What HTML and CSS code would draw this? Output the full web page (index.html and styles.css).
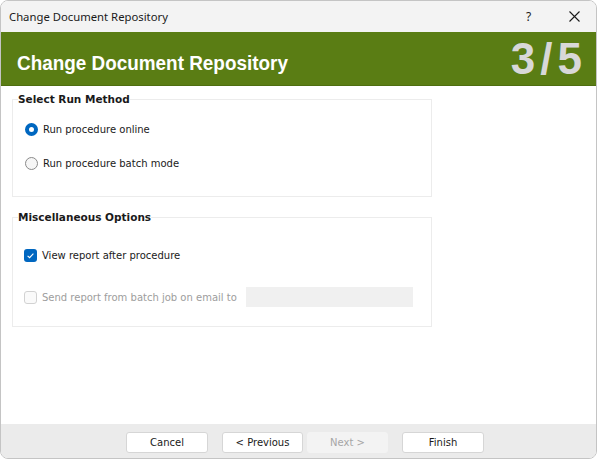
FILE: index.html
```html
<!DOCTYPE html>
<html>
<head>
<meta charset="utf-8">
<link rel="stylesheet" href="styles.css">
</head>
<body>
<div class="window">
  <div class="titlebar">
    <span class="title">Change Document Repository</span>
    <span class="tb-help">?</span>
    <span class="tb-close"><svg width="11" height="11" viewBox="0 0 11 11"><path d="M0.5 0.5L10.5 10.5M10.5 0.5L0.5 10.5" stroke="#1a1a1a" stroke-width="1.1" fill="none"/></svg></span>
  </div>
  <div class="banner">
    <span class="banner-title">Change Document Repository</span>
    <span class="banner-step">3/5</span>
  </div>
  <div class="content">
    <fieldset class="group group-run">
      <legend>Select Run Method</legend>
      <div class="row row-first"><span class="radio radio-on"></span><span class="label">Run procedure online</span></div>
      <div class="row"><span class="radio"></span><span class="label">Run procedure batch mode</span></div>
    </fieldset>
    <fieldset class="group group-misc">
      <legend>Miscellaneous Options</legend>
      <div class="row row-first"><span class="check check-on"><svg width="13" height="13" viewBox="0 0 13 13"><path d="M3.6 6.8L5.6 8.7L9.4 4.6" stroke="#fff" stroke-width="1.1" fill="none"/></svg></span><span class="label">View report after procedure</span></div>
      <div class="row row-email"><span class="check check-off"></span><span class="label label-off">Send report from batch job on email to</span><span class="email"></span></div>
    </fieldset>
  </div>
  <div class="footer">
    <button class="btn">Cancel</button>
    <button class="btn btn-prev">&lt; Previous</button>
    <button class="btn btn-next">Next &gt;</button>
    <button class="btn btn-finish">Finish</button>
  </div>
</div>
</body>
</html>
```
FILE: styles.css
```css
html, body { margin: 0; padding: 0; background: #ffffff; }
.window {
  width: 595px;
  height: 457px;
  margin-top: 0;
  border: 1px solid #c4c4c4;
  border-radius: 8px;
  overflow: hidden;
  display: flex;
  flex-direction: column;
  background: #ffffff;
}
.titlebar {
  height: 31px;
  flex: none;
  background: #f3f3f3;
  display: flex;
  align-items: center;
  font-family: "Noto Sans", "Open Sans", sans-serif;
  font-size: 11.3px;
  color: #1a1a1a;
}
.title { margin-left: 8px; flex: 1; }
.tb-help { width: 20px; margin-right: 23px; font-size: 12px; }
.tb-close { width: 11px; margin-right: 16px; display: flex; }
.banner {
  height: 53px;
  flex: none;
  background: #5a7d14;
  display: flex;
  align-items: center;
  justify-content: space-between;
  font-family: "Liberation Sans", Arial, sans-serif;
  font-weight: bold;
  border-bottom: 1px solid #4e6e10;
  overflow: hidden;
}
.banner-title {
  color: #ffffff;
  font-size: 21px;
  margin-left: 16px;
  margin-top: 9px;
  display: inline-block;
  transform: scaleX(0.9);
  transform-origin: left center;
  white-space: nowrap;
}
.banner-step {
  color: #d8d8d8;
  font-size: 44px;
  margin-right: 9px;
  letter-spacing: 5px;
  display: inline-block;
}
.content {
  flex: 1;
  padding: 6px 0 0 11px;
  font-family: "DejaVu Sans", Tahoma, sans-serif;
  font-size: 10px;
  color: #1a1a1a;
}
.group {
  width: 420px;
  margin: 0;
  padding: 0 0 0 11px;
  border: 1px solid #ececec;
  box-sizing: border-box;
}
.group legend {
  font-weight: bold;
  padding: 0;
  margin-left: -6px;
  font-family: "DejaVu Sans", Tahoma, sans-serif;
  font-size: 10.5px;
  line-height: 14px;
}
.group-run { height: 105px; }
.group-misc { height: 117px; margin-top: 13px; }
.row { display: flex; align-items: center; height: 20px; margin-top: 14px; }
.group-run .row-first { margin-top: 13px; }
.group-misc .row-first { margin-top: 21px; }
.group-misc .row-email { margin-top: 22px; }
.label { margin-left: 5px; }
.label-off { color: #9d9d9d; }
.radio {
  width: 13px; height: 13px; box-sizing: border-box;
  border-radius: 50%;
  border: 1px solid #8a8a8a;
  background: #f6f6f6;
  margin-left: 1px;
}
.radio-on {
  border: 4px solid #0067c0;
  background: #ffffff;
}
.check {
  width: 13px; height: 13px; box-sizing: border-box;
  border-radius: 3px;
  display: flex;
}
.check-on { background: #0067c0; }
.check-off { border: 1px solid #d2d2d2; background: #fafafa; }
.email {
  width: 167px; height: 20px;
  background: #f0f0f0;
  margin-left: 9px;
}
.footer {
  height: 34px;
  box-sizing: border-box;
  padding-top: 2px;
  flex: none;
  background: #ebebeb;
  display: flex;
  align-items: center;
  padding-left: 125px;
}
.btn {
  width: 82px;
  height: 21px;
  box-sizing: border-box;
  border: 1px solid #d6d6d6;
  border-radius: 3px;
  background: #ffffff;
  font-family: "DejaVu Sans", Tahoma, sans-serif;
  font-size: 10px;
  color: #1a1a1a;
  padding: 0;
  margin: 0;
}
.btn-prev { margin-left: 14px; width: 81px; }
.btn-next { margin-left: 4px; width: 81px; background: #f3f3f3; border-color: #f3f3f3; color: #a6a6a6; }
.btn-finish { margin-left: 14px; }
```
